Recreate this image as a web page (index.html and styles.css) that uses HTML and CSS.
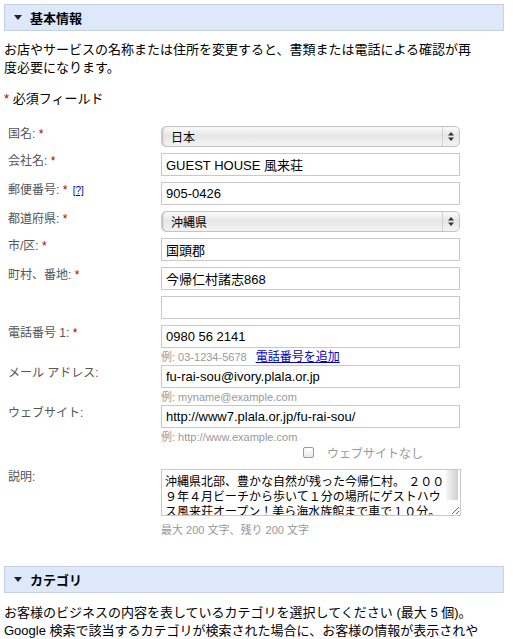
FILE: index.html
```html
<!DOCTYPE html>
<html lang="ja">
<head>
    <meta charset="UTF-8">
    <title>基本情報</title>
    <link rel="stylesheet" href="styles.css">
</head>
<body>
<div class="page">
    <div class="section-head"><span class="tri"></span>基本情報</div>
    <p class="intro">お店やサービスの名称または住所を変更すると、書類または電話による確認が再度必要になります。</p>
    <p class="req"><span class="star">*</span> 必須フィールド</p>

    <div class="form">
        <div class="row">
            <div class="label">国名: <span class="star">*</span></div>
            <div class="field">
                <div class="select">
                    <span class="select-text">日本</span>
                    <span class="select-arrows">
                        <svg width="6" height="9" viewBox="0 0 6 9"><path d="M3 0L6 3.5H0z M3 9L0 5.5H6z" fill="#333"/></svg>
                    </span>
                </div>
            </div>
        </div>
        <div class="row">
            <div class="label">会社名: <span class="star">*</span></div>
            <div class="field"><input class="input" type="text" value="GUEST HOUSE 風来荘"></div>
        </div>
        <div class="row">
            <div class="label">郵便番号: <span class="star">*</span> <a class="help" href="javascript:;">[?]</a></div>
            <div class="field"><input class="input" type="text" value="905-0426"></div>
        </div>
        <div class="row">
            <div class="label">都道府県: <span class="star">*</span></div>
            <div class="field">
                <div class="select">
                    <span class="select-text">沖縄県</span>
                    <span class="select-arrows">
                        <svg width="6" height="9" viewBox="0 0 6 9"><path d="M3 0L6 3.5H0z M3 9L0 5.5H6z" fill="#333"/></svg>
                    </span>
                </div>
            </div>
        </div>
        <div class="row">
            <div class="label">市/区: <span class="star">*</span></div>
            <div class="field"><input class="input" type="text" value="国頭郡"></div>
        </div>
        <div class="row">
            <div class="label">町村、番地: <span class="star">*</span></div>
            <div class="field"><input class="input" type="text" value="今帰仁村諸志868"></div>
        </div>
        <div class="row">
            <div class="label"></div>
            <div class="field"><input class="input" type="text" value=""></div>
        </div>
        <div class="row row-tight">
            <div class="label">電話番号 1: <span class="star">*</span></div>
            <div class="field">
                <input class="input" type="text" value="0980 56 2141">
                <div class="hint">例: 03-1234-5678 <a class="add-link" href="javascript:;">電話番号を追加</a></div>
            </div>
        </div>
        <div class="row row-tight">
            <div class="label">メール アドレス:</div>
            <div class="field">
                <input class="input" type="text" value="fu-rai-sou@ivory.plala.or.jp">
                <div class="hint">例: myname@example.com</div>
            </div>
        </div>
        <div class="row row-tight">
            <div class="label">ウェブサイト:</div>
            <div class="field">
                <input class="input" type="text" value="http://www7.plala.or.jp/fu-rai-sou/">
                <div class="hint">例: http://www.example.com</div>
                <label class="no-site"><input class="check" type="checkbox">ウェブサイトなし</label>
            </div>
        </div>
        <div class="row row-desc">
            <div class="label">説明:</div>
            <div class="field">
                <textarea class="desc">沖縄県北部、豊かな自然が残った今帰仁村。 ２００９年４月ビーチから歩いて１分の場所にゲストハウス風来荘オープン！美ら海水族館まで車で１０分。</textarea>
                <div class="hint hint-count">最大 200 文字、残り 200 文字</div>
            </div>
        </div>
    </div>

    <div class="section-head section-cat"><span class="tri"></span>カテゴリ</div>
    <p class="cat-text">お客様のビジネスの内容を表しているカテゴリを選択してください (最大 5 個)。 Google 検索で該当するカテゴリが検索された場合に、お客様の情報が表示されやすくなります。</p>
</div>
</body>
</html>
```

FILE: styles.css
```css
*{
    padding: 0;
    margin: 0;
}
body{
    padding: 4px;
    font-family: "Liberation Sans", "Noto Sans CJK JP", sans-serif;
    font-size: 13px;
    color: #000;
    background: #fff;
}
.page{
    width: 500px;
}
.section-head{
    height: 27px;
    box-sizing: border-box;
    border: 1px solid #c6d0e0;
    background-color: #dde8fb;
    display: flex;
    align-items: center;
    gap: 8px;
    padding-left: 9px;
    font-weight: bold;
    font-size: 13px;
}
.section-head .tri{
    width: 0;
    height: 0;
    border-left: 4px solid transparent;
    border-right: 4px solid transparent;
    border-top: 5px solid #222;
}
.intro{
    margin-top: 10px;
    width: 470px;
    line-height: 18px;
}
.req{
    margin-top: 13px;
    line-height: 18px;
}
.star{
    color: #a00;
}
.form{
    margin-top: 18px;
}
.row{
    display: flex;
    margin-bottom: 6px;
}
.row-tight{
    margin-bottom: 0;
}
.row-desc{
    margin-top: 10px;
}
.label{
    width: 157px;
    padding-left: 4px;
    box-sizing: border-box;
    font-size: 12px;
    line-height: 16px;
    color: #555;
}
.label .help{
    font-size: 10px;
    color: #00c;
    margin-left: 2px;
}
.field{
    width: 300px;
}
.input{
    display: block;
    box-sizing: border-box;
    width: 299px;
    height: 23px;
    border: 1px solid #c8c8c8;
    padding: 0 4px;
    font-family: "Liberation Sans", "Noto Sans CJK JP", sans-serif;
    font-size: 13px;
    color: #000;
    outline: none;
}
.select{
    box-sizing: border-box;
    width: 299px;
    height: 21px;
    border: 1px solid #c4c4c4;
    border-radius: 5px;
    background: linear-gradient(#fbfbfb, #e6e6e6 45%, #f4f4f4);
    box-shadow: inset 2px 0 2px -1px #bbb;
    display: flex;
    align-items: center;
    font-size: 12px;
}
.select-text{
    flex: 1;
    padding-left: 9px;
}
.select-arrows{
    width: 16px;
    height: 100%;
    border-left: 1px solid #d0d0d0;
    display: flex;
    align-items: center;
    justify-content: center;
}
.hint{
    margin-top: 1px;
    font-size: 11px;
    line-height: 16px;
    color: #999;
}
.add-link{
    color: #00c;
    font-size: 12px;
    margin-left: 6px;
}
.no-site{
    display: flex;
    align-items: center;
    gap: 13px;
    height: 14px;
    padding-left: 142px;
    font-size: 12px;
    color: #999;
}
.check{
    -webkit-appearance: none;
    appearance: none;
    width: 11px;
    height: 11px;
    border: 1px solid #9a9a9a;
    border-radius: 2px;
    background: linear-gradient(#fff, #e9e9e9);
    margin: 0;
}
/* scrollbar drawn as a background strip: headless hides real ones */
.desc{
    display: block;
    box-sizing: border-box;
    width: 300px;
    height: 47px;
    border: 1px solid #c8c8c8;
    padding: 5px 15px 0 3px;
    font-family: "Liberation Sans", "Noto Sans CJK JP", sans-serif;
    font-size: 12px;
    line-height: 15px;
    color: #000;
    overflow: hidden;
    outline: none;
    background: #fff linear-gradient(to right, #f6f6f6, #cfcfcf) no-repeat right 2px top 0 / 12px 30px;
}
.hint-count{
    margin-top: 6px;
}
.section-cat{
    margin-top: 28px;
}
.cat-text{
    margin-top: 11px;
    width: 486px;
    line-height: 18px;
}
```
